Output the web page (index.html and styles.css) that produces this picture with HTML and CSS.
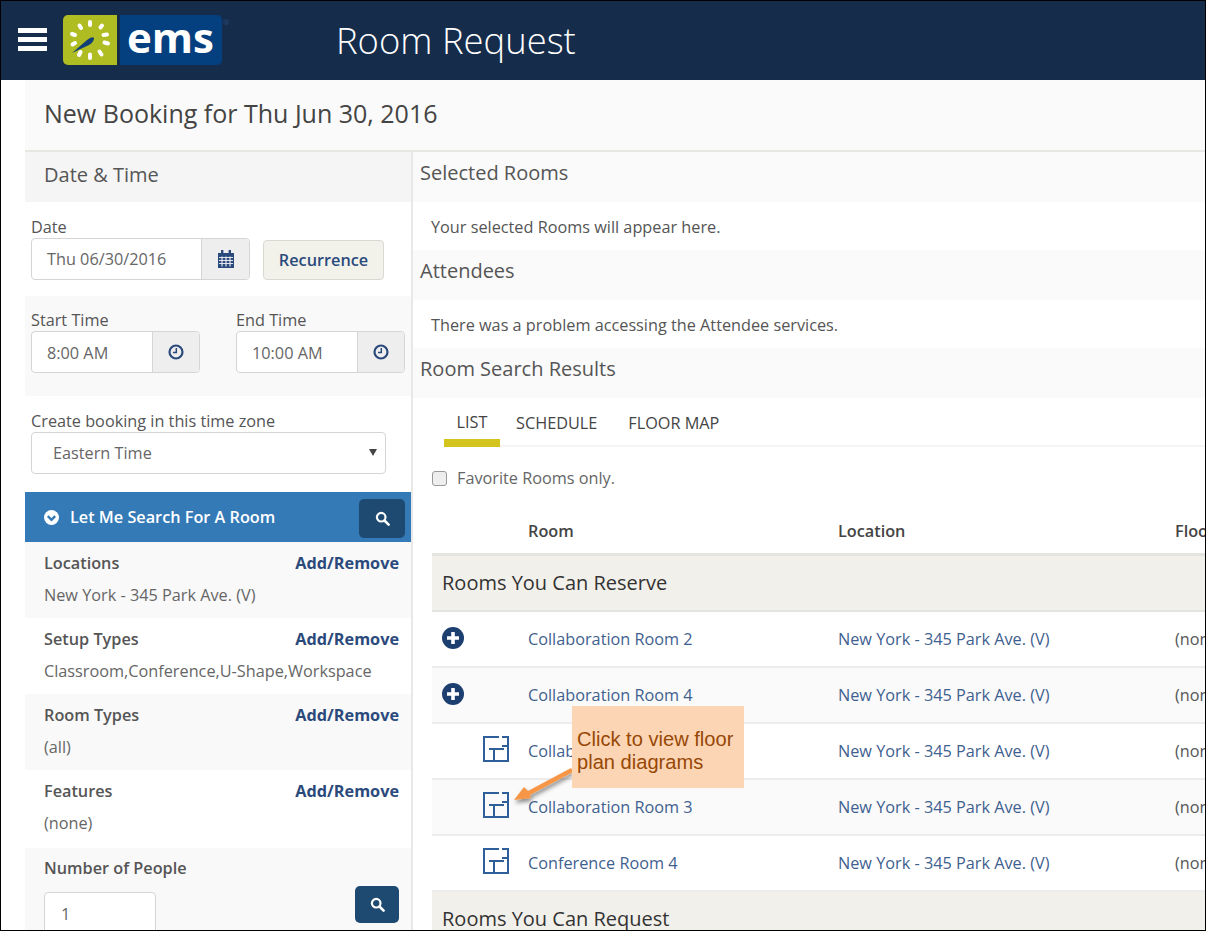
FILE: index.html
```html
<!DOCTYPE html>
<html>
  <head>
    <meta charset="UTF-8">
    <title>Room Request</title>
    <link rel="stylesheet" href="styles.css">
  </head>
  <body>
    <div class="frame">
      <header class="topbar">
        <div class="burger"><span></span><span></span><span></span></div>
        <div class="logo">
          <div class="logo-mark">
            <svg width="54" height="50" viewBox="0 0 54 50">
              <g stroke="#fff" stroke-width="4" stroke-linecap="round">
                <line x1="27" y1="7" x2="27" y2="10"/>
                <line x1="37.5" y1="12.5" x2="39" y2="10.5"/>
                <line x1="40.5" y1="20" x2="44" y2="19.5"/>
                <line x1="41.5" y1="27.5" x2="45" y2="28.5"/>
                <line x1="36.5" y1="36.5" x2="38.5" y2="39.5"/>
                <line x1="27" y1="39.5" x2="27" y2="43"/>
                <line x1="17.5" y1="37" x2="16" y2="40"/>
                <line x1="12" y1="28" x2="9.5" y2="29.5"/>
                <line x1="12" y1="20" x2="9" y2="19"/>
                <line x1="18" y1="13" x2="16.5" y2="10.5"/>
              </g>
              <path d="M9 38 L24 25 Q29 21 31 23 Q31 27 26 30 Z" fill="#123f75"/>
            </svg>
          </div>
          <div class="logo-word">ems</div>
        </div>
        <span class="logo-reg">®</span>
        <h1 class="app-title">Room Request</h1>
      </header>

      <div class="page">
        <div class="booking-title">New Booking for Thu Jun 30, 2016</div>

        <div class="columns">
          <aside class="sidebar">
            <div class="band side-band">Date &amp; Time</div>

            <div class="date-block">
              <label class="lbl">Date</label>
              <div class="date-row">
                <div class="input-group date-group">
                  <div class="input-val">Thu 06/30/2016</div>
                  <div class="addon">
                    <svg width="16" height="18" viewBox="0 0 16 18">
                      <path fill="#2b4a7c" d="M0 3h16v15H0zM3 0h2.4v4H3zM10.6 0H13v4h-2.4z"/>
                      <path stroke="#e4e4ee" stroke-width="1.2" d="M1 7.5h14M1 10.5h14M1 13.5h14M4 6.5v10M8 6.5v10M12 6.5v10"/>
                    </svg>
                  </div>
                </div>
                <button class="btn-recur">Recurrence</button>
              </div>
            </div>

            <div class="time-block">
              <div class="time-col">
                <label class="lbl">Start Time</label>
                <div class="input-group time-group">
                  <div class="input-val">8:00 AM</div>
                  <div class="addon">
                    <svg class="clock" width="16" height="16" viewBox="0 0 16 16">
                      <circle cx="8" cy="8" r="6.5" fill="none" stroke="#2b4a7c" stroke-width="2.2"/>
                      <path d="M8.3 4v4.4H5" fill="none" stroke="#2b4a7c" stroke-width="1.5"/>
                    </svg>
                  </div>
                </div>
              </div>
              <div class="time-col">
                <label class="lbl">End Time</label>
                <div class="input-group time-group">
                  <div class="input-val">10:00 AM</div>
                  <div class="addon">
                    <svg class="clock" width="16" height="16" viewBox="0 0 16 16">
                      <circle cx="8" cy="8" r="6.5" fill="none" stroke="#2b4a7c" stroke-width="2.2"/>
                      <path d="M8.3 4v4.4H5" fill="none" stroke="#2b4a7c" stroke-width="1.5"/>
                    </svg>
                  </div>
                </div>
              </div>
            </div>

            <div class="zone-block">
              <label class="lbl">Create booking in this time zone</label>
              <div class="select-box">
                <span>Eastern Time</span>
                <span class="caret"></span>
              </div>
            </div>

            <div class="search-head">
              <svg width="15" height="15" viewBox="0 0 15 15">
                <circle cx="7.5" cy="7.5" r="7.5" fill="#fff"/>
                <path d="M3.8 6.2 7.5 9.8l3.7-3.6" fill="none" stroke="#337ab7" stroke-width="2.4"/>
              </svg>
              <span class="search-title">Let Me Search For A Room</span>
              <button class="btn-search wide">
                <svg width="15" height="15" viewBox="0 0 15 15">
                  <circle cx="6.2" cy="6.2" r="4.3" fill="none" stroke="#fff" stroke-width="2.2"/>
                  <path d="M9.5 9.5 13.6 13.6" stroke="#fff" stroke-width="2.6" stroke-linecap="round"/>
                </svg>
              </button>
            </div>

            <div class="filter shade">
              <div class="filter-top"><b>Locations</b><a>Add/Remove</a></div>
              <div class="filter-val">New York - 345 Park Ave. (V)</div>
            </div>
            <div class="filter">
              <div class="filter-top"><b>Setup Types</b><a>Add/Remove</a></div>
              <div class="filter-val">Classroom,Conference,U-Shape,Workspace</div>
            </div>
            <div class="filter shade">
              <div class="filter-top"><b>Room Types</b><a>Add/Remove</a></div>
              <div class="filter-val">(all)</div>
            </div>
            <div class="filter filter-last">
              <div class="filter-top"><b>Features</b><a>Add/Remove</a></div>
              <div class="filter-val">(none)</div>
            </div>

            <div class="people">
              <b>Number of People</b>
              <div class="people-row">
                <div class="people-input">1</div>
                <button class="btn-search small">
                  <svg width="15" height="15" viewBox="0 0 15 15">
                    <circle cx="6.2" cy="6.2" r="4.3" fill="none" stroke="#fff" stroke-width="2.2"/>
                    <path d="M9.5 9.5 13.6 13.6" stroke="#fff" stroke-width="2.6" stroke-linecap="round"/>
                  </svg>
                </button>
              </div>
            </div>
          </aside>

          <main class="results">
            <div class="band">Selected Rooms</div>
            <p class="note">Your selected Rooms will appear here.</p>
            <div class="band">Attendees</div>
            <p class="note">There was a problem accessing the Attendee services.</p>
            <div class="band">Room Search Results</div>

            <div class="tabs">
              <div class="tab active">LIST</div>
              <div class="tab">SCHEDULE</div>
              <div class="tab">FLOOR MAP</div>
            </div>

            <div class="favorites">
              <span class="checkbox"></span>
              <span>Favorite Rooms only.</span>
            </div>

            <div class="table">
              <div class="row head">
                <div></div><div>Room</div><div>Location</div><div>Floor</div>
              </div>
              <div class="group">Rooms You Can Reserve</div>
              <div class="row">
                <div class="cell-icon"><svg class="plus" width="22" height="22" viewBox="0 0 22 22"><circle cx="11" cy="11" r="11" fill="#1c3f70"/><path d="M11 5v12M5 11h12" stroke="#fff" stroke-width="3.6"/></svg></div>
                <div><a>Collaboration Room 2</a></div><div><a>New York - 345 Park Ave. (V)</a></div><div>(none)</div>
              </div>
              <div class="row shade">
                <div class="cell-icon"><svg class="plus" width="22" height="22" viewBox="0 0 22 22"><circle cx="11" cy="11" r="11" fill="#1c3f70"/><path d="M11 5v12M5 11h12" stroke="#fff" stroke-width="3.6"/></svg></div>
                <div><a>Collaboration Room 4</a></div><div><a>New York - 345 Park Ave. (V)</a></div><div>(none)</div>
              </div>
              <div class="row">
                <div class="cell-icon"><svg class="plan" width="26" height="26" viewBox="0 0 26 26"><path d="M16 1H1v24h24V1h-6M25 10h-6M6 13h15M11 13v12" fill="none" stroke="#2f5f98" stroke-width="2"/></svg></div>
                <div><a>Collaboration Room 1</a></div><div><a>New York - 345 Park Ave. (V)</a></div><div>(none)</div>
              </div>
              <div class="row shade">
                <div class="cell-icon"><svg class="plan" width="26" height="26" viewBox="0 0 26 26"><path d="M16 1H1v24h24V1h-6M25 10h-6M6 13h15M11 13v12" fill="none" stroke="#2f5f98" stroke-width="2"/></svg></div>
                <div><a>Collaboration Room 3</a></div><div><a>New York - 345 Park Ave. (V)</a></div><div>(none)</div>
              </div>
              <div class="row">
                <div class="cell-icon"><svg class="plan" width="26" height="26" viewBox="0 0 26 26"><path d="M16 1H1v24h24V1h-6M25 10h-6M6 13h15M11 13v12" fill="none" stroke="#2f5f98" stroke-width="2"/></svg></div>
                <div><a>Conference Room 4</a></div><div><a>New York - 345 Park Ave. (V)</a></div><div>(none)</div>
              </div>
              <div class="group">Rooms You Can Request</div>
            </div>
          </main>
        </div>
      </div>

      <!-- annotation over the screenshot -->
      <svg class="arrow" width="80" height="70" viewBox="0 0 80 70">
        <defs>
          <filter id="arrow-shadow" x="-30%" y="-30%" width="160%" height="160%">
            <feDropShadow dx="1" dy="3" stdDeviation="2" flood-color="#000" flood-opacity="0.45"/>
          </filter>
        </defs>
        <path d="M2 48 L12 35 L16 39 L59 16 L61 20 L18 43 L19 46 Z" fill="#f79646" filter="url(#arrow-shadow)"/>
      </svg>
      <div class="callout">Click to view floor<br>plan diagrams</div>
    </div>
  </body>
</html>
```

FILE: styles.css
```css
* {
  box-sizing: border-box;
}
html, body {
  margin: 0;
  padding: 0;
}
body {
  width: 1206px;
  height: 931px;
  overflow: hidden;
  font-family: "Open Sans", sans-serif;
  font-size: 16.25px;
  color: #555;
}
.frame {
  position: relative;
  width: 1206px;
  height: 931px;
  overflow: hidden;
  background: #fff;
  border: 1px solid #000;
}

/* top bar */
.topbar {
  display: flex;
  align-items: center;
  height: 79px;
  padding-left: 17px;
  background: #152c4b;
}
.burger {
  width: 29px;
  margin: -3px 16px 0 0;
}
.burger span {
  display: block;
  height: 5px;
  margin-bottom: 4px;
  background: #fff;
}
.burger span:last-child {
  margin-bottom: 0;
}
.logo {
  display: flex;
  width: 159px;
  height: 50px;
  margin-top: -1px;
}
.logo-mark {
  width: 54px;
  height: 50px;
  background: #afbd22;
  border-radius: 5px 0 0 5px;
}
.logo-word {
  flex: 1;
  margin-left: 3px;
  padding-left: 7px;
  background: #043f7f;
  border-radius: 0 5px 5px 0;
  color: #fff;
  font-size: 42px;
  font-weight: 700;
  line-height: 44px;
}
.logo-reg {
  width: 8px;
  margin: -38px 0 0 1px;
  font-size: 8px;
  color: #2b4a7c;
}
.app-title {
  margin: -2px 0 0 105px;
  font-size: 36.4px;
  font-weight: 300;
  color: #fff;
}

/* page */
.page {
  margin-left: 24px;
}
.booking-title {
  height: 72px;
  padding: 0 19px;
  background: #fafafa;
  border-bottom: 2px solid #e6e6e2;
  font-size: 25px;
  line-height: 67px;
  color: #444;
}
.columns {
  display: flex;
}
.sidebar {
  width: 388px;
  flex: none;
  border-right: 2px solid #e8e8e8;
}
.results {
  flex: 1;
  min-width: 0;
}
.band {
  height: 50px;
  padding-left: 7px;
  background: #fafafa;
  font-size: 20px;
  line-height: 41px;
  color: #555;
}
.side-band {
  padding-left: 19px;
  background: #f5f5f5;
  line-height: 46px;
}
.lbl {
  display: block;
  height: 20px;
  line-height: 18px;
  color: #555;
}

/* date + time */
.date-block {
  height: 94px;
  padding: 16px 0 0 6px;
}
.date-row {
  display: flex;
  align-items: flex-end;
}
.input-group {
  display: flex;
  height: 42px;
  border: 1px solid #d5d5d5;
  border-radius: 4px;
  background: #fff;
  overflow: hidden;
}
.date-group {
  width: 219px;
}
.time-group {
  width: 169px;
}
.input-val {
  flex: 1;
  padding-left: 15px;
  line-height: 40px;
  color: #666;
}
.time-group .input-val {
  line-height: 42px;
}
.addon {
  display: flex;
  align-items: center;
  justify-content: center;
  width: 48px;
  background: #eeeeee;
  border-left: 1px solid #d5d5d5;
}
.time-group .addon {
  width: 47px;
}
.btn-recur {
  width: 121px;
  height: 40px;
  margin-left: 13px;
  padding: 0;
  background: #f2f1ea;
  border: 1px solid #d9d9d2;
  border-radius: 4px;
  font-family: "Open Sans", sans-serif;
  font-size: 16.25px;
  font-weight: 600;
  color: #2b4a7c;
}
.time-block {
  display: flex;
  gap: 36px;
  height: 100px;
  padding: 15px 0 0 6px;
  background: #f9f9f9;
}
.zone-block {
  height: 96px;
  padding: 16px 0 0 6px;
}
.select-box {
  display: flex;
  align-items: center;
  justify-content: space-between;
  width: 355px;
  height: 42px;
  padding: 0 8px 0 21px;
  background: #fff;
  border: 1px solid #d5d5d5;
  border-radius: 4px;
  color: #666;
}
.caret {
  width: 0;
  height: 0;
  margin-top: -2px;
  border-left: 4px solid transparent;
  border-right: 4px solid transparent;
  border-top: 7px solid #444;
}

/* search */
.search-head {
  display: flex;
  align-items: center;
  height: 50px;
  padding: 0 6px 0 19px;
  background: #337ab7;
  color: #fff;
}
.search-title {
  flex: 1;
  margin-left: 11px;
  font-weight: 600;
}
.btn-search {
  display: flex;
  align-items: center;
  justify-content: center;
  padding: 0;
  background: #1e4a72;
  border: 0;
  border-radius: 5px;
}
.btn-search.wide {
  width: 46px;
  height: 39px;
  margin-top: 2px;
}
.btn-search.small {
  width: 44px;
  height: 37px;
  margin-top: 8px;
}
.filter {
  height: 76px;
  padding: 11px 12px 0 19px;
}
.filter.shade {
  background: #f9f9f9;
}
.filter-last {
  height: 78px;
}
.filter-top {
  display: flex;
  justify-content: space-between;
  line-height: 20px;
}
.filter b, .people b {
  font-weight: 600;
  color: #555;
}
.filter a {
  font-weight: 700;
  color: #2b4a7c;
}
.filter-val {
  margin-top: 12px;
  line-height: 20px;
  color: #666;
}
.people {
  padding: 10px 12px 0 19px;
  height: 90px;
  background: #f9f9f9;
}
.people b {
  display: block;
  line-height: 20px;
}
.people-row {
  display: flex;
  justify-content: space-between;
  align-items: flex-start;
}
.people-input {
  width: 112px;
  height: 44px;
  margin-top: 14px;
  padding-left: 16px;
  background: #fff;
  border: 1px solid #d5d5d5;
  border-radius: 4px;
  line-height: 42px;
  color: #666;
}

/* results */
.note {
  height: 48px;
  margin: 0;
  padding-left: 18px;
  line-height: 50px;
  color: #555;
}
.tabs {
  display: flex;
  height: 49px;
  margin-left: 31px;
  border-bottom: 2px solid #f5f5f5;
}
.tab {
  height: 49px;
  margin-right: 31px;
  padding-top: 15px;
  line-height: 20px;
  color: #444;
}
.tab.active {
  width: 56px;
  margin-right: 16px;
  padding-top: 14px;
  text-align: center;
  border-bottom: 8px solid #d4c41e;
}
.favorites {
  display: flex;
  align-items: center;
  gap: 10px;
  height: 58px;
  margin-left: 19px;
  padding-top: 4px;
  color: #666;
}
.checkbox {
  width: 15px;
  height: 15px;
  background: #eee;
  border: 1px solid #999;
  border-radius: 3px;
}
.table {
  margin-left: 19px;
}
.row {
  display: grid;
  grid-template-columns: 96px 310px 337px 1fr;
  align-items: center;
  height: 56px;
  border-bottom: 2px solid #ececec;
  color: #555;
  white-space: nowrap;
  overflow: hidden;
}
.row a {
  color: #3f6190;
}
.row.shade {
  background: #fafafa;
}
.row.head {
  height: 51px;
  padding-top: 3px;
  border-bottom: 3px solid #e4e4e0;
  font-weight: 600;
  color: #444;
}
.group {
  height: 56px;
  padding-left: 10px;
  background: #f2f0eb;
  border-bottom: 2px solid #e4e4e0;
  font-size: 20px;
  line-height: 54px;
  color: #333;
}
.cell-icon {
  display: flex;
  align-items: center;
}
.plus {
  margin: -2px 0 0 10px;
}
.plan {
  margin: -4px 0 0 51px;
}

/* annotation */
.callout {
  position: absolute;
  left: 571px;
  top: 705px;
  width: 172px;
  height: 82px;
  padding: 22px 0 0 5px;
  background: #fcd5b4;
  font-family: "Liberation Sans", sans-serif;
  font-size: 20.1px;
  line-height: 23px;
  color: #974806;
}
.arrow {
  position: absolute;
  left: 511px;
  top: 751px;
}
```
